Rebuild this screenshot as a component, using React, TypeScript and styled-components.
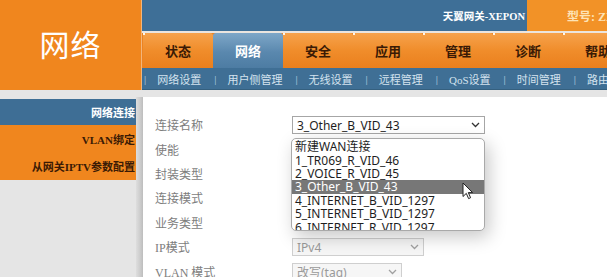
import React from "react";
import styled, { createGlobalStyle } from "styled-components";

const GlobalStyle = createGlobalStyle`
  html, body {
    margin: 0;
    padding: 0;
    background: #ffffff;
  }
  body {
    width: 607px;
    height: 277px;
    overflow: hidden;
    font-family: "Liberation Serif", "Noto Sans CJK SC", serif;
  }
`;

const Page = styled.div`
  width: 607px;
  height: 277px;
  display: flex;
  flex-direction: column;
  overflow: hidden;
  background: #e5e5e5;
`;

const Header = styled.header`
  display: flex;
  height: 90px;
  flex: none;
`;

const Logo = styled.div`
  width: 142px;
  flex: none;
  box-sizing: border-box;
  background: #f0861e;
  border-right: 1px solid #f3b57a;
  color: #ffffff;
  display: flex;
  align-items: center;
  justify-content: center;
  padding-bottom: 4px;
  font-family: "Noto Sans CJK SC", sans-serif;
  font-size: 30px;
  letter-spacing: 1px;
`;

const HeaderRight = styled.div`
  flex: 1;
  min-width: 0;
  display: flex;
  flex-direction: column;
  overflow: hidden;
`;

const TopBar = styled.div`
  height: 31px;
  display: flex;
  justify-content: flex-end;
  align-items: stretch;
  background: #3e6f97;
`;

const Brand = styled.div`
  display: flex;
  align-items: center;
  padding-right: 2px;
  color: #ffffff;
  font-weight: bold;
  font-size: 10.5px;
  white-space: nowrap;
`;

const ModelBox = styled.div`
  width: 80px;
  box-sizing: border-box;
  padding-left: 40px;
  display: flex;
  align-items: center;
  background: #f29227;
  color: #fde3b6;
  font-weight: bold;
  font-size: 12px;
  white-space: nowrap;
  overflow: hidden;
`;

const TopGap = styled.div`
  height: 2px;
  background: #ebe5df;
`;

const Tabs = styled.nav`
  height: 35px;
  display: flex;
  padding-left: 1px;
  background: #ec8322;
`;

const Tab = styled.div<{ $active?: boolean }>`
  position: relative;
  width: 70px;
  flex: none;
  display: flex;
  align-items: center;
  justify-content: center;
  font-weight: bold;
  font-size: 13px;
  color: ${(p) => (p.$active ? "#ffffff" : "#3a1a05")};
  background: ${(p) =>
    p.$active
      ? "linear-gradient(#7ea7c8, #5a88ae 55%, #4d7ca3)"
      : "linear-gradient(#f6a24c, #f08d2b 50%, #ea7f1d)"};
  border-radius: 3px 3px 0 0;

  &::before {
    content: "";
    position: absolute;
    left: 0;
    top: 0;
    width: 2px;
    height: 2px;
    background: ${(p) => (p.$active ? "transparent" : "#fff4e6")};
  }
`;

const SubNav = styled.div`
  height: 22px;
  display: flex;
  align-items: center;
  background: #3f6f95;
  border-bottom: 1px solid #35607f;
  box-sizing: border-box;
  color: #d4e3ef;
  font-size: 11px;
  white-space: nowrap;
`;

const SubSep = styled.span`
  margin-left: 2px;
  color: #b9cfe1;
`;

const SubItem = styled.span`
  padding: 0 11px;
`;

const Body = styled.div`
  flex: 1;
  display: flex;
  padding-top: 7px;
  min-height: 0;
`;

const Sidebar = styled.aside`
  width: 136px;
  flex: none;
  padding-top: 2px;
  display: flex;
  flex-direction: column;
  background: #e5e5e5;
`;

const SideItem = styled.div<{ $tone: "blue" | "orange"; $h: number }>`
  height: ${(p) => p.$h}px;
  display: flex;
  align-items: center;
  justify-content: flex-end;
  padding-right: 1px;
  background: ${(p) => (p.$tone === "blue" ? "#3e6e95" : "#f0861e")};
  color: ${(p) => (p.$tone === "blue" ? "#ffffff" : "#3a1a05")};
  font-weight: bold;
  font-size: 11px;
  white-space: nowrap;
`;

const Divider = styled.div`
  width: 7px;
  flex: none;
  background: linear-gradient(to right, #dedede, #c9c9c9 70%, #bdbdbd);
`;

const Content = styled.main`
  flex: 1;
  background: #ffffff;
  padding: 16px 0 0 12px;
`;

const Form = styled.div`
  display: grid;
  grid-template-columns: 137px 1fr;
  grid-auto-rows: 24.4px;
  align-items: center;
`;

const Label = styled.div`
  color: #7d7d7d;
  font-size: 12px;
  white-space: nowrap;
`;

const Field = styled.div`
  position: relative;
  height: 100%;
  display: flex;
  align-items: center;
`;

const SelectBox = styled.div<{ $w: number; $disabled?: boolean }>`
  width: ${(p) => p.$w}px;
  height: 18px;
  box-sizing: border-box;
  display: flex;
  align-items: center;
  justify-content: space-between;
  padding: 0 4px 0 4px;
  border: 1px solid ${(p) => (p.$disabled ? "#cfcfcf" : "#a6a6a6")};
  background: ${(p) => (p.$disabled ? "#f6f6f6" : "#ffffff")};
  color: ${(p) => (p.$disabled ? "#9a9a9a" : "#1e1e1e")};
  font-family: "Noto Sans", "Noto Sans CJK SC", sans-serif;
  font-size: 12px;
  white-space: nowrap;
`;

const DropList = styled.div`
  position: absolute;
  left: -1px;
  top: calc(50% + 13px);
  width: 194px;
  height: 93px;
  box-sizing: border-box;
  padding-top: 1px;
  border: 1px solid #a9a9a9;
  border-radius: 5px;
  background: #ffffff;
  overflow: hidden;
  box-shadow: 4px 6px 18px rgba(0, 0, 0, 0.22);
  z-index: 2;
`;

const Option = styled.div<{ $selected?: boolean }>`
  height: 13.4px;
  line-height: 13.4px;
  padding-left: 3px;
  font-family: "Noto Sans", "Noto Sans CJK SC", sans-serif;
  font-size: 12px;
  white-space: nowrap;
  background: ${(p) => (p.$selected ? "#777777" : "transparent")};
  color: ${(p) => (p.$selected ? "#ffffff" : "#1e1e1e")};
`;

const Pointer = styled.svg`
  position: absolute;
  left: 170px;
  top: 69px;
  z-index: 3;
`;

const Chevron = ({ color }: { color: string }) => (
  <svg width="9" height="6" viewBox="0 0 9 6">
    <path d="M1 1 L4.5 4.5 L8 1" fill="none" stroke={color} strokeWidth="1.3" />
  </svg>
);

const tabs = ["状态", "网络", "安全", "应用", "管理", "诊断", "帮助"];
const subItems = ["网络设置", "用户侧管理", "无线设置", "远程管理", "QoS设置", "时间管理", "路由设置"];
const options = [
  "新建WAN连接",
  "1_TR069_R_VID_46",
  "2_VOICE_R_VID_45",
  "3_Other_B_VID_43",
  "4_INTERNET_B_VID_1297",
  "5_INTERNET_B_VID_1297",
  "6_INTERNET_R_VID_1297",
];

export default function App() {
  return (
    <>
      <GlobalStyle />
      <Page>
        <Header>
          <Logo>网络</Logo>
          <HeaderRight>
            <TopBar>
              <Brand>天翼网关-XEPON</Brand>
              <ModelBox>型号: ZXHN</ModelBox>
            </TopBar>
            <TopGap />
            <Tabs>
              {tabs.map((t) => (
                <Tab key={t} $active={t === "网络"}>
                  {t}
                </Tab>
              ))}
            </Tabs>
            <SubNav>
              {subItems.map((s) => (
                <React.Fragment key={s}>
                  <SubSep>|</SubSep>
                  <SubItem>{s}</SubItem>
                </React.Fragment>
              ))}
            </SubNav>
          </HeaderRight>
        </Header>
        <Body>
          <Sidebar>
            <SideItem $tone="blue" $h={26}>网络连接</SideItem>
            <SideItem $tone="orange" $h={27}>VLAN绑定</SideItem>
            <SideItem $tone="orange" $h={28}>从网关IPTV参数配置</SideItem>
          </Sidebar>
          <Divider />
          <Content>
            <Form>
              <Label>连接名称</Label>
              <Field>
                <SelectBox $w={193}>
                  <span>3_Other_B_VID_43</span>
                  <Chevron color="#333" />
                </SelectBox>
                <DropList>
                  {options.map((o) => (
                    <Option key={o} $selected={o === "3_Other_B_VID_43"}>
                      {o}
                    </Option>
                  ))}
                </DropList>
                <Pointer width="12" height="18" viewBox="0 0 12 18">
                  <path
                    d="M1 1 L1 14.5 L4.3 11.4 L6.6 16.6 L8.6 15.7 L6.3 10.6 L10.6 10.6 Z"
                    fill="#ffffff"
                    stroke="#222"
                    strokeWidth="1"
                    strokeLinejoin="round"
                  />
                </Pointer>
              </Field>
              <Label>使能</Label>
              <Field />
              <Label>封装类型</Label>
              <Field />
              <Label>连接模式</Label>
              <Field />
              <Label>业务类型</Label>
              <Field />
              <Label>IP模式</Label>
              <Field>
                <SelectBox $w={132} $disabled>
                  <span>IPv4</span>
                  <Chevron color="#a0a0a0" />
                </SelectBox>
              </Field>
              <Label>VLAN 模式</Label>
              <Field>
                <SelectBox $w={110} $disabled>
                  <span>改写(tag)</span>
                  <Chevron color="#a0a0a0" />
                </SelectBox>
              </Field>
            </Form>
          </Content>
        </Body>
      </Page>
    </>
  );
}
